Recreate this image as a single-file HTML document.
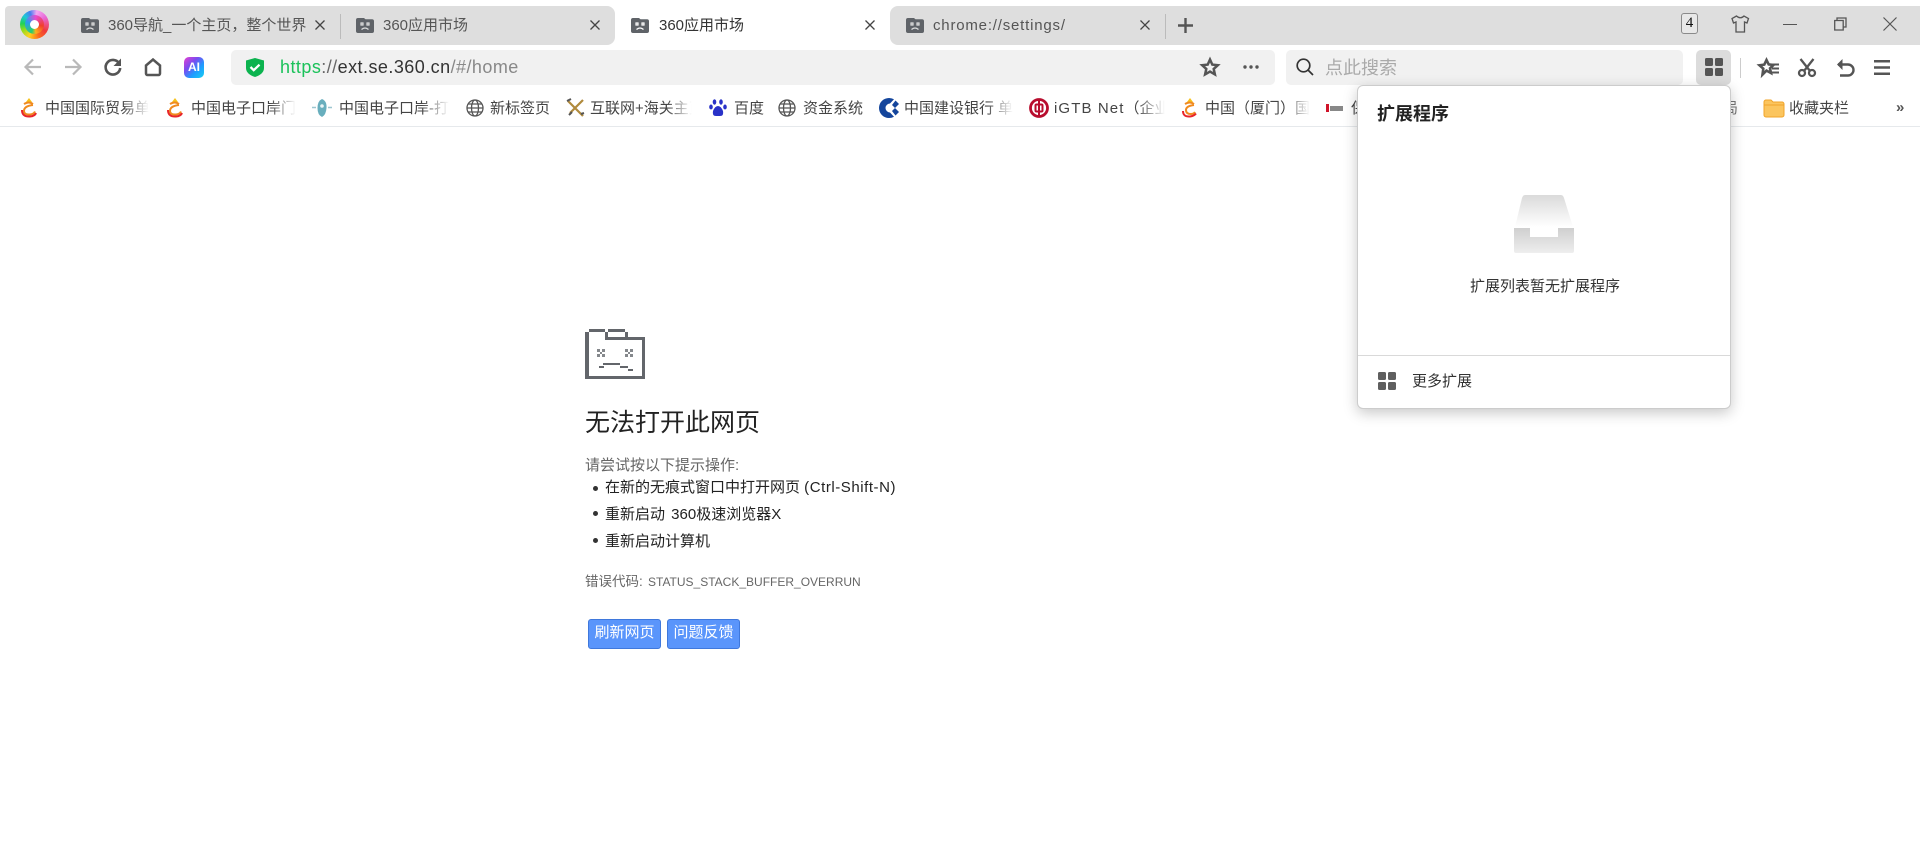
<!DOCTYPE html>
<html lang="zh"><head><meta charset="utf-8"><title>360应用市场</title>
<style>
html,body{margin:0;padding:0;background:#fff;width:1920px;height:859px;overflow:hidden}
body{position:relative;font-family:"Liberation Sans","Noto Sans CJK SC",sans-serif;color:#333}
.a{position:absolute}
.t{position:absolute;white-space:nowrap;line-height:20px;font-size:15px}
svg{position:absolute;overflow:visible}
.tab{color:#555}
.bm{color:#444;overflow:hidden;-webkit-mask-image:linear-gradient(to right,#000 75%,transparent 100%);mask-image:linear-gradient(to right,#000 75%,transparent 100%)}
.bp{color:#444}
.btn{position:absolute;top:619px;height:28px;width:71px;background:#5a95fb;border:1px solid #3f78dc;border-radius:3px;color:#fff;font-size:15px;line-height:26px;text-align:center}
</style></head><body>

<!-- tab strip -->
<div class="a" style="left:5px;top:6px;width:610px;height:39px;background:#dedede;border-radius:4px 8px 8px 0"></div>
<div class="a" style="left:890px;top:6px;width:1030px;height:39px;background:#dedede;border-radius:8px 0 0 8px"></div>

<!-- logo -->
<div class="a" style="left:20px;top:10px;width:29px;height:29px;border-radius:50%;background:conic-gradient(from 10deg,#f4a6f0,#e86ad8 45deg,#f03a3a 110deg,#fb6a1e 150deg,#ffd21e 195deg,#8fdc1e 235deg,#1ed25a 265deg,#1ec8d8 300deg,#4a7cf0 330deg,#f4a6f0)"></div>
<div class="a" style="left:25px;top:15px;width:19px;height:19px;border-radius:50%;background:conic-gradient(from 200deg,#2ad06a,#2a9cf0 90deg,#e84ad0 170deg,#f0402a 260deg,#ffb01e 330deg,#2ad06a)"></div>
<div class="a" style="left:30px;top:20px;width:9px;height:9px;border-radius:50%;background:#fff"></div>

<!-- tabs -->
<svg style="left:81px;top:18px" width="18" height="15" viewBox="0 0 18 15"><path d="M0 2a2 2 0 0 1 2-2h6l1.500 1.200H16a2 2 0 0 1 2 2V13a2 2 0 0 1-2 2H2a2 2 0 0 1-2-2z" fill="#5f6368"/><path d="M5 5h2v2H5zM11 5h2v2h-2zM5.500 11.500q3.500-3 7 0" fill="none" stroke="#dedede" stroke-width="1.200"/></svg>
<div class="t tab" style="left:108px;top:16px">360导航_一个主页，整个世界</div>
<svg style="left:315px;top:20px" width="10" height="10"><path d="M.5.500l9 9M9.500.500l-9 9" stroke="#444" stroke-width="1.300"/></svg>
<div class="a" style="left:339.500px;top:14px;width:1px;height:25px;background:#bbb"></div>

<svg style="left:356px;top:18px" width="18" height="15" viewBox="0 0 18 15"><path d="M0 2a2 2 0 0 1 2-2h6l1.500 1.200H16a2 2 0 0 1 2 2V13a2 2 0 0 1-2 2H2a2 2 0 0 1-2-2z" fill="#5f6368"/><path d="M5 5h2v2H5zM11 5h2v2h-2zM5.500 11.500q3.500-3 7 0" fill="none" stroke="#dedede" stroke-width="1.200"/></svg>
<div class="t tab" style="left:383px;top:16px">360应用市场</div>
<svg style="left:590px;top:20px" width="10" height="10"><path d="M.5.500l9 9M9.500.500l-9 9" stroke="#444" stroke-width="1.300"/></svg>

<svg style="left:631px;top:18px" width="18" height="15" viewBox="0 0 18 15"><path d="M0 2a2 2 0 0 1 2-2h6l1.500 1.200H16a2 2 0 0 1 2 2V13a2 2 0 0 1-2 2H2a2 2 0 0 1-2-2z" fill="#5f6368"/><path d="M5 5h2v2H5zM11 5h2v2h-2zM5.500 11.500q3.500-3 7 0" fill="none" stroke="#fff" stroke-width="1.200"/></svg>
<div class="t" style="left:659px;top:16px;color:#333">360应用市场</div>
<svg style="left:865px;top:20px" width="10" height="10"><path d="M.5.500l9 9M9.500.500l-9 9" stroke="#444" stroke-width="1.300"/></svg>

<svg style="left:906px;top:18px" width="18" height="15" viewBox="0 0 18 15"><path d="M0 2a2 2 0 0 1 2-2h6l1.500 1.200H16a2 2 0 0 1 2 2V13a2 2 0 0 1-2 2H2a2 2 0 0 1-2-2z" fill="#5f6368"/><path d="M5 5h2v2H5zM11 5h2v2h-2zM5.500 11.500q3.500-3 7 0" fill="none" stroke="#dedede" stroke-width="1.200"/></svg>
<div class="t tab" style="left:933px;top:16px;letter-spacing:.8px">chrome://settings/</div>
<svg style="left:1140px;top:20px" width="10" height="10"><path d="M.5.500l9 9M9.500.500l-9 9" stroke="#444" stroke-width="1.300"/></svg>
<div class="a" style="left:1164.500px;top:14px;width:1px;height:25px;background:#bbb"></div>
<svg style="left:1178px;top:18px" width="15" height="15"><path d="M7.500 0v15M0 7.500h15" stroke="#555" stroke-width="2.400"/></svg>

<!-- window controls -->
<div class="a" style="left:1681px;top:13px;width:15px;height:19px;border:1.500px solid #8a8a8a;border-radius:3px;background:#e8e8e8;color:#111;font:15px/19px 'Liberation Serif',serif;text-align:center">4</div>
<svg style="left:1731px;top:15px" width="18" height="18"><path d="M5.500 1L1 3.500 2.500 8 5 7v10h8.500V7L16 8l1.500-4.500L13 1q-3.500 3.500-7.500 0z" fill="none" stroke="#555" stroke-width="1.300"/></svg>
<div class="a" style="left:1783px;top:24px;width:14px;height:1.300px;background:#555"></div>
<svg style="left:1834px;top:17px" width="13" height="14"><path d="M3 3V1h9v9h-2.500M.7 3.500h8.500v9.500H.7z" fill="none" stroke="#555" stroke-width="1.300"/></svg>
<svg style="left:1883px;top:17px" width="14" height="14"><path d="M.5.500l13 13M13.500.500l-13 13" stroke="#555" stroke-width="1.200"/></svg>

<!-- toolbar -->
<svg style="left:24px;top:58px" width="18" height="18"><path d="M17 9H2M9 1.500L1.500 9 9 16.500" fill="none" stroke="#b9b9b9" stroke-width="2.200"/></svg>
<svg style="left:64px;top:58px" width="18" height="18"><path d="M1 9h15M9 1.500L16.500 9 9 16.500" fill="none" stroke="#b9b9b9" stroke-width="2.200"/></svg>
<svg style="left:104px;top:58px" width="18" height="18"><path d="M15 5.200A7.300 7.300 0 1 0 16.200 10" fill="none" stroke="#555" stroke-width="2.600"/><path d="M17 .5v7.500H9.500z" fill="#555"/></svg>
<svg style="left:144px;top:58px" width="18" height="18"><path d="M2 7.500L9 1.500l7 6V15.500a1.500 1.500 0 0 1-1.500 1.500h-11A1.500 1.500 0 0 1 2 15.500z" fill="none" stroke="#555" stroke-width="2.500"/></svg>
<div class="a" style="left:184px;top:57px;width:20px;height:21px;border-radius:5px;background:linear-gradient(135deg,#e83fd0 0%,#7a4cf0 35%,#1e9cff 65%,#18d0f0 100%);color:#fff;font:bold 12px/21px 'Liberation Sans',sans-serif;text-align:center">AI</div>

<div class="a" style="left:231px;top:50px;width:1044px;height:35px;background:#f1f1f1;border-radius:5px"></div>
<svg style="left:246px;top:58px" width="18" height="19"><path d="M9 0l9 2.500V10q0 6-9 9-9-3-9-9V2.500z" fill="#0cb34f"/><path d="M4.500 9l3.200 3.200 5.800-5.500" fill="none" stroke="#fff" stroke-width="2.300"/></svg>
<div class="t" style="left:280px;top:57px;font-size:18px;letter-spacing:.45px;color:#888"><span style="color:#1bc25a">https</span><span style="color:#666">://</span><span style="color:#333">ext.se.360.cn</span>/#/home</div>
<svg style="left:1201px;top:58px" width="18" height="18"><path d="M9 1.500l2.300 5.100 5.500.6-4.100 3.700 1.200 5.500L9 13.600l-4.900 2.800 1.200-5.500L1.200 7.200l5.500-.6z" fill="none" stroke="#555" stroke-width="2.500"/></svg>
<svg style="left:1243px;top:65px" width="16" height="4"><circle cx="2" cy="2" r="1.700" fill="#555"/><circle cx="8" cy="2" r="1.700" fill="#555"/><circle cx="14" cy="2" r="1.700" fill="#555"/></svg>

<div class="a" style="left:1286px;top:50px;width:397px;height:35px;background:#f1f1f1;border-radius:5px"></div>
<svg style="left:1296px;top:58px" width="18" height="18"><circle cx="7.500" cy="7.500" r="6.300" fill="none" stroke="#333" stroke-width="1.700"/><path d="M12 12l5 5" stroke="#333" stroke-width="1.700"/></svg>
<div class="t" style="left:1325px;top:58px;font-size:18px;color:#aaa">点此搜索</div>

<div class="a" style="left:1696px;top:50px;width:35px;height:35px;background:#dcdcdc;border-radius:5px"></div>
<svg style="left:1705px;top:58px" width="18" height="18"><g fill="#555"><rect width="8" height="8" rx="1.500"/><rect x="10" width="8" height="8" rx="1.500"/><rect y="10" width="8" height="8" rx="1.500"/><rect x="10" y="10" width="8" height="8" rx="1.500"/></g></svg>
<div class="a" style="left:1739.500px;top:58px;width:1px;height:20px;background:#ccc"></div>

<svg style="left:1758px;top:58px" width="22" height="19"><path d="M8.500 2l2.200 4.400 4.800.6-3.500 3.300 1 4.700-4.500-2.400-4 4 .8-6L1.500 7.300l4.800-.7z" fill="none" stroke="#555" stroke-width="2.600"/><path d="M13 6.500h8M14 10.500h7M13 14.500h8" stroke="#555" stroke-width="2"/></svg>
<svg style="left:1798px;top:58px" width="18" height="19"><circle cx="4" cy="15" r="3" fill="none" stroke="#555" stroke-width="2.300"/><circle cx="14" cy="15" r="3" fill="none" stroke="#555" stroke-width="2.300"/><path d="M2.500 1l9.500 12M15.500 1L6 13" stroke="#555" stroke-width="2.300"/></svg>
<svg style="left:1836px;top:59px" width="18" height="18"><path d="M2 5.500h10a5 5 0 0 1 0 11H4" fill="none" stroke="#555" stroke-width="2.400"/><path d="M6.500 0v11L1 5.500z" fill="#555"/></svg>
<svg style="left:1874px;top:60px" width="16" height="15"><path d="M0 1.200h16M0 7.500h16M0 13.800h16" stroke="#555" stroke-width="2.500"/></svg>

<!-- bookmarks -->
<div class="a" style="left:0;top:126px;width:1920px;height:1px;background:#e6e9ec"></div>

<svg style="left:20px;top:98px" width="18" height="20"><path d="M9 0l3 4H6z" fill="#f6c21c"/><path d="M4 6q5-3 9 0M13 7q-9 1-9 6 0 4 6 3.500 4-.5 5-3" fill="none" stroke="#f08a1e" stroke-width="2"/><path d="M2 12q0 7 8 6.500 5-.5 6-3.500" fill="none" stroke="#e8252a" stroke-width="2"/></svg>
<div class="t bm" style="left:45px;top:99px;width:104px">中国国际贸易单一窗口</div>
<svg style="left:166px;top:98px" width="18" height="20"><path d="M9 0l3 4H6z" fill="#f6c21c"/><path d="M4 6q5-3 9 0M13 7q-9 1-9 6 0 4 6 3.500 4-.5 5-3" fill="none" stroke="#f08a1e" stroke-width="2"/><path d="M2 12q0 7 8 6.500 5-.5 6-3.500" fill="none" stroke="#e8252a" stroke-width="2"/></svg>
<div class="t bm" style="left:191px;top:99px;width:105px">中国电子口岸门户网</div>
<svg style="left:312px;top:98px" width="20" height="20"><path d="M10 1q5 2 4.500 9T10 19q-4.500-2-4.500-9T10 1z" fill="#68aebd"/><path d="M0 9.500h4M16 9.500h4" stroke="#9cc6d0" stroke-width="1.500"/><circle cx="10" cy="8" r="1.800" fill="#e8f4f6"/></svg>
<div class="t bm" style="left:339px;top:99px;width:110px">中国电子口岸-打印</div>
<svg style="left:466px;top:99px" width="18" height="18"><g fill="none" stroke="#555" stroke-width="1.300"><circle cx="9" cy="9" r="8"/><ellipse cx="9" cy="9" rx="3.500" ry="8"/><path d="M1 9h16M2 5h14M2 13h14"/></g></svg>
<div class="t bp" style="left:490px;top:99px">新标签页</div>
<svg style="left:566px;top:98px" width="20" height="20"><path d="M2 3l15 15M17 2L4 15" stroke="#b08a3c" stroke-width="2.200"/><path d="M1 3l4-2M15 16l3-1M3 17l3-3" stroke="#555" stroke-width="2"/></svg>
<div class="t bm" style="left:590px;top:99px;width:102px">互联网+海关主页面</div>
<svg style="left:709px;top:99px" width="18" height="18"><g fill="#2932c8"><ellipse cx="5.500" cy="3" rx="1.800" ry="2.700"/><ellipse cx="12" cy="3" rx="1.800" ry="2.700"/><ellipse cx="2" cy="8" rx="1.800" ry="2.500"/><ellipse cx="16" cy="8" rx="1.800" ry="2.500"/><path d="M9 7q3 0 5 5 1 5-3 5H7q-4 0-3-5 2-5 5-5z"/></g></svg>
<div class="t bp" style="left:734px;top:99px">百度</div>
<svg style="left:778px;top:99px" width="18" height="18"><g fill="none" stroke="#555" stroke-width="1.300"><circle cx="9" cy="9" r="8"/><ellipse cx="9" cy="9" rx="3.500" ry="8"/><path d="M1 9h16M2 5h14M2 13h14"/></g></svg>
<div class="t bp" style="left:803px;top:99px">资金系统</div>
<svg style="left:879px;top:98px" width="20" height="20"><path d="M10 0a10 10 0 1 0 0 20 10 10 0 0 0 5-1.300L11 14.500a4.500 4.500 0 1 1 0-9L15 1.300A10 10 0 0 0 10 0z" fill="#14459c"/><path d="M16.500 2.500L13 7l3 3 4-4z" fill="#14459c"/><path d="M16 10l-3 3 3.500 4.500L20 14z" fill="#14459c"/></svg>
<div class="t bm" style="left:904px;top:99px;width:109px">中国建设银行 单位</div>
<svg style="left:1029px;top:98px" width="20" height="20"><circle cx="10" cy="10" r="8.500" fill="none" stroke="#b80d2e" stroke-width="2.800"/><rect x="6.500" y="6.500" width="7" height="7" rx="1" fill="none" stroke="#b80d2e" stroke-width="2"/><path d="M10 2v16" stroke="#b80d2e" stroke-width="2"/></svg>
<div class="t bm" style="left:1054px;top:99px;width:111px"><span style="letter-spacing:1.100px">iGTB Net</span>（企业网银</div>
<svg style="left:1182px;top:98px" width="16" height="20"><path d="M8 0l3 4H5z" fill="#f6c21c"/><path d="M3 6q5-3 9 0M12 7q-8 1-8 5 0 4 5 4 3 0 4-2" fill="none" stroke="#f08a1e" stroke-width="2"/><path d="M1 13q0 6 7 5.500 4-.5 6-3" fill="none" stroke="#e8252a" stroke-width="2"/></svg>
<div class="t bm" style="left:1205px;top:99px;width:105px">中国（厦门）国际</div>
<div class="a" style="left:1326px;top:104px;width:3px;height:8px;background:#d0142a"></div>
<div class="a" style="left:1330px;top:106px;width:13px;height:5px;background:#888"></div>
<div class="t bm" style="left:1351px;top:99px;width:30px">保税</div>
<div class="t" style="left:1731px;top:99px;width:16px;overflow:hidden;color:#777"><span style="margin-left:-8px">局</span></div>
<svg style="left:1764px;top:99px" width="20" height="18"><path d="M0 3a2 2 0 0 1 2-2h5l2 2h9a2 2 0 0 1 2 2v11a2 2 0 0 1-2 2H2a2 2 0 0 1-2-2z" fill="#fbc55e" stroke="#f0a429" stroke-width="1"/><path d="M.5 6h19" stroke="#f0a429"/></svg>
<div class="t bp" style="left:1789px;top:99px">收藏夹栏</div>
<div class="t" style="left:1896px;top:98px;color:#555;font-weight:bold">»</div>

<!-- error page -->
<svg style="left:585px;top:329px" width="60" height="50" shape-rendering="crispEdges"><g fill="#63666b">
<rect x="0" y="3" width="4" height="47"/><rect x="4" y="0" width="16" height="3"/><rect x="20" y="3" width="3" height="8"/><rect x="23" y="0" width="17" height="3"/><rect x="23" y="8" width="17" height="3"/><rect x="40" y="3" width="3" height="5"/><rect x="40" y="8" width="20" height="3"/><rect x="57" y="8" width="3" height="42"/><rect x="0" y="47" width="60" height="3"/>
<rect x="14" y="37" width="5" height="2"/><rect x="18" y="34" width="17" height="2"/><rect x="35" y="37" width="8" height="2"/><rect x="43" y="40" width="5" height="2"/></g>
<path d="M12 20h3v3h-3zM17 20h3v3h-3zM15 23h2v2h-2zM12 25h3v3h-3zM17 25h3v3h-3zM40 20h3v3h-3zM45 20h3v3h-3zM43 23h2v2h-2zM40 25h3v3h-3zM45 25h3v3h-3z" fill="#85888c"/></svg>
<div class="t" style="left:585px;top:408px;font-size:25px;line-height:30px;color:#222">无法打开此网页</div>
<div class="t" style="left:585px;top:456px;color:#666">请尝试按以下提示操作:</div>
<div class="a" style="left:592.500px;top:485.500px;width:5px;height:5px;border-radius:50%;background:#333"></div>
<div class="t" style="left:605px;top:478px;color:#222">在新的无痕式窗口中打开网页 <span style="letter-spacing:.55px">(Ctrl-Shift-N)</span></div>
<div class="a" style="left:592.500px;top:511px;width:5px;height:5px;border-radius:50%;background:#333"></div>
<div class="t" style="left:605px;top:505px;color:#222;word-spacing:2px">重新启动 360极速浏览器X</div>
<div class="a" style="left:592.500px;top:538px;width:5px;height:5px;border-radius:50%;background:#333"></div>
<div class="t" style="left:605px;top:532px;color:#222">重新启动计算机</div>
<div class="t" style="left:585px;top:572px;font-size:13.500px;color:#666">错误代码:<span style="position:absolute;left:63px;top:0;font-size:12px">STATUS_STACK_BUFFER_OVERRUN</span></div>
<div class="btn" style="left:588px">刷新网页</div>
<div class="btn" style="left:667px">问题反馈</div>

<!-- popup -->
<div class="a" style="left:1357px;top:85px;width:372px;height:322px;background:#fff;border:1px solid #ccc;border-radius:6px;box-shadow:0 4px 14px rgba(0,0,0,.22)"></div>
<div class="t" style="left:1377px;top:104px;font-size:18px;font-weight:bold;color:#222">扩展程序</div>
<svg style="left:1514px;top:195px" width="60" height="58"><defs><linearGradient id="g1" x1="0" y1="0" x2="0" y2="1"><stop offset="0" stop-color="#dadada"/><stop offset="1" stop-color="#ffffff"/></linearGradient><linearGradient id="g2" x1="0" y1="0" x2="0" y2="1"><stop offset="0" stop-color="#cfcfcf"/><stop offset="1" stop-color="#eeeeee"/></linearGradient></defs><path d="M11 0h36q2 0 3 3l9 29H1L8 3q1-3 3-3z" fill="url(#g1)"/><path d="M0 33h16v9h28v-9h16v23a2 2 0 0 1-2 2H2a2 2 0 0 1-2-2z" fill="url(#g2)"/></svg>
<div class="t" style="left:1470px;top:277px;color:#333">扩展列表暂无扩展程序</div>
<div class="a" style="left:1358px;top:355px;width:372px;height:1px;background:#d9d9d9"></div>
<svg style="left:1378px;top:372px" width="18" height="18"><g fill="#5f5f5f"><rect width="8" height="8" rx="1.500"/><rect x="10" width="8" height="8" rx="1.500"/><rect y="10" width="8" height="8" rx="1.500"/><rect x="10" y="10" width="8" height="8" rx="1.500"/></g></svg>
<div class="t" style="left:1412px;top:372px;color:#333">更多扩展</div>

</body></html>
